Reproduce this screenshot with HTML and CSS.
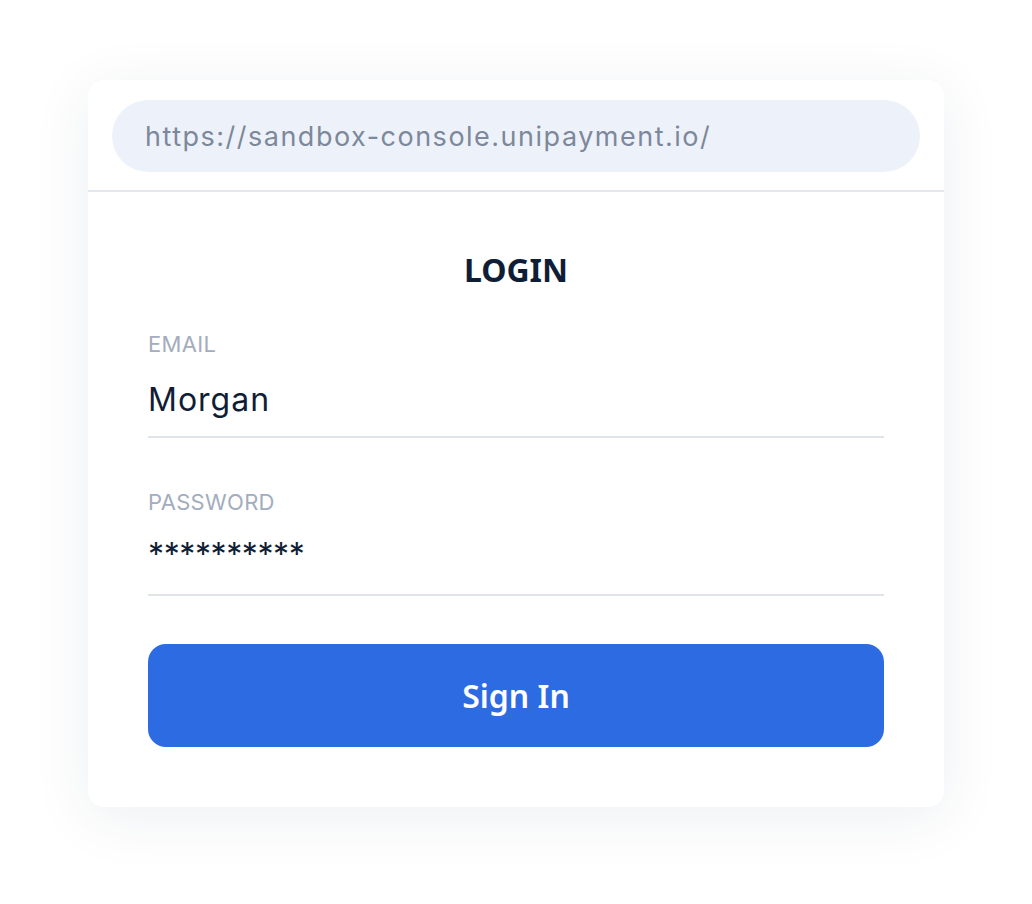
FILE: index.html
```html
<!DOCTYPE html>
<html lang="en">
<head>
  <meta charset="UTF-8">
  <meta name="viewport" content="width=device-width, initial-scale=1.0">
  <title>Login</title>
  <link rel="stylesheet" href="styles.css">
</head>
<body>
  <div class="page">
    <div class="card">
      <div class="browser-bar">
        <div class="url">https://sandbox-console.unipayment.io/</div>
      </div>
      <form class="login">
        <h1>LOGIN</h1>
        <div class="field email">
          <label>EMAIL</label>
          <div class="value">Morgan</div>
        </div>
        <div class="field password">
          <label>PASSWORD</label>
          <div class="value stars">**********</div>
        </div>
        <button type="button" class="b1">Sign In</button>
      </form>
    </div>
  </div>
</body>
</html>
```

FILE: styles.css
```css
body {
  margin: 0;
  padding: 0;
  background: #fff;
  font-family: Inter, "Open Sans", sans-serif;
}

.page {
  padding: 80px 88px;
}

.card {
  width: 856px;
  height: 727px;
  background: #fff;
  border-radius: 16px;
  box-shadow: 0 10px 60px rgba(30, 45, 80, 0.08);
  box-sizing: border-box;
}

.browser-bar {
  padding: 20px 24px 18px;
  border-bottom: 2px solid #e3e7ee;
}

.url {
  height: 72px;
  border-radius: 36px;
  background: #edf2fa;
  padding-left: 33px;
  display: flex;
  align-items: center;
  font-size: 27px;
  letter-spacing: 1.5px;
  color: #7d889a;
}

.login {
  padding: 0 60px;
}

h1 {
  margin: 0;
  padding-top: 58px;
  height: 40px;
  line-height: 40px;
  text-align: center;
  font-family: "Noto Sans", sans-serif;
  font-weight: 700;
  font-size: 32px;
  color: #0f1e36;
}

.field {
  border-bottom: 2px solid #dfe3ea;
}

.field label {
  display: block;
  height: 22px;
  line-height: 22px;
  font-size: 22px;
  letter-spacing: 0.3px;
  color: #a3adbd;
}

.value {
  height: 32px;
  line-height: 32px;
  font-size: 32px;
  letter-spacing: 1px;
  color: #0f1e36;
}

.email {
  margin-top: 43px;
  padding-bottom: 20px;
}

.email .value {
  margin-top: 29px;
}

.password {
  margin-top: 53px;
  padding-bottom: 23px;
}

.password .value {
  margin-top: 26px;
}

.stars {
  letter-spacing: -0.4px;
}

.b1 {
  display: block;
  width: 100%;
  height: 103px;
  margin-top: 48px;
  border: none;
  border-radius: 18px;
  background: #2d6be3;
  color: #fff;
  font-family: "Noto Sans", sans-serif;
  font-weight: 600;
  font-size: 32px;
}
```
